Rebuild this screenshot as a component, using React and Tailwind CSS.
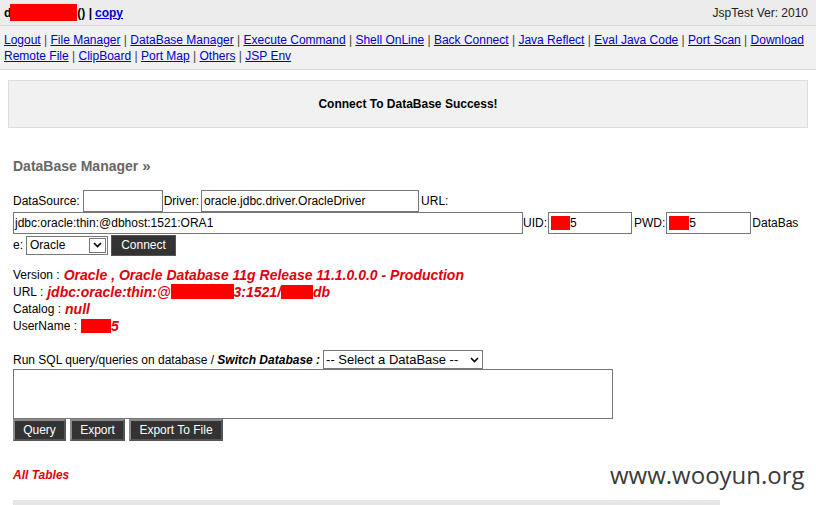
import React from "react";

const Red = ({ w, h = 16, className = "" }) => (
  <span className={`inline-block bg-[#ff0000] align-middle ${className}`} style={{ width: w, height: h }} />
);

const Chevron = () => (
  <svg width="9" height="6" viewBox="0 0 9 6"><path d="M1 1 L4.5 4.5 L8 1" fill="none" stroke="#000" strokeWidth="1.6" /></svg>
);

const Btn = ({ children, w }) => (
  <span className={`inline-flex h-[22px] items-center justify-center bg-[#333] text-white border-2 border-[#8a8a8a] border-r-[#555] border-b-[#555] ${w}`}>{children}</span>
);

const Sep = () => <span className="text-[#444]"> | </span>;
const L = ({ children }) => <a className="text-[#0000cc] underline">{children}</a>;

const Val = ({ children }) => (
  <span className="ml-[4px] text-[14px] leading-none font-bold italic text-[#e0000a] flex items-center">{children}</span>
);

export default function App() {
  const nav1 = ["Logout", "File Manager", "DataBase Manager", "Execute Command", "Shell OnLine", "Back Connect", "Java Reflect", "Eval Java Code", "Port Scan", "Download"];
  const nav2 = ["Remote File", "ClipBoard", "Port Map", "Others", "JSP Env"];
  return (
    <div className="relative w-[816px] h-[505px] overflow-hidden bg-white text-[12px] text-black" style={{ fontFamily: '"Liberation Sans", Arial, sans-serif' }}>
      {/* top bar */}
      <div className="h-[26px] bg-[#ececec] border-b border-[#d8d8d8] flex items-center justify-between pl-[4px] pr-[8px]">
        <div className="font-bold flex items-center">
          <span>d</span>
          <Red w={67} h={17} className="-ml-[1px]" />
          <span>() | </span>
          <span className="text-[#0000cc] underline ml-[3px]">copy</span>
        </div>
        <div className="text-[#222]">JspTest Ver: 2010</div>
      </div>
      {/* nav */}
      <div className="bg-[#f1f1f1] border-b border-[#d8d8d8] pl-[4px] pt-[6px] pb-[5px] leading-[16px]">
        <div>
          {nav1.map((n, i) => (
            <React.Fragment key={n}>{i > 0 && <Sep />}<L>{n}</L></React.Fragment>
          ))}
        </div>
        <div>
          {nav2.map((n, i) => (
            <React.Fragment key={n}>{i > 0 && <Sep />}<L>{n}</L></React.Fragment>
          ))}
        </div>
      </div>
      {/* message */}
      <div className="mx-[8px] mt-[10px] w-[800px] h-[48px] bg-[#f1f1f1] border border-[#dcdcdc] flex items-center justify-center font-bold">
        Connect To DataBase Success!
      </div>

      <div className="pl-[13px]">
        <div className="mt-[30px] text-[14px] font-bold text-[#666] leading-[16px]">DataBase Manager <span className="text-[15px]">»</span></div>

        {/* form */}
        <div className="mt-[16px]">
          <div className="flex items-center h-[22px]">
            <span>DataSource:</span>
            <span className="ml-[3px] w-[80px] h-[22px] border border-[#777] bg-white" />
            <span className="ml-[1px]">Driver:</span>
            <span className="ml-[2px] w-[218px] h-[22px] border border-[#777] bg-white flex items-center px-[2px]">oracle.jdbc.driver.OracleDriver</span>
            <span className="ml-[2px]">URL:</span>
          </div>
          <div className="flex items-center h-[22px]">
            <span className="w-[510px] h-[22px] border border-[#777] bg-white flex items-center px-[1px]">jdbc:oracle:thin:@dbhost:1521:ORA1</span>
            <span>UID:</span>
            <span className="ml-[1px] w-[84px] h-[22px] border border-[#777] bg-white flex items-center px-[2px]"><Red w={19} h={14} />5</span>
            <span className="ml-[2px]">PWD:</span>
            <span className="ml-[1px] w-[85px] h-[22px] border border-[#777] bg-white flex items-center px-[2px]"><Red w={20} h={14} />5</span>
            <span className="ml-[1px]">DataBas</span>
          </div>
          <div className="flex items-center h-[22px]">
            <span>e:</span>
            <span className="ml-[3px] w-[82px] h-[19px] border border-[#777] bg-white flex items-center justify-between pl-[3px] pr-[1px]">
              <span>Oracle</span>
              <span className="w-[17px] h-[15px] border border-[#777] flex items-center justify-center"><Chevron /></span>
            </span>
            <span className="ml-[3px] h-[21px] w-[65px] bg-[#333] text-white flex items-center justify-center border border-[#555]">Connect</span>
          </div>
        </div>

        {/* info */}
        <div className="mt-[11px]">
          <div className="h-[16px] flex items-center">Version :<Val>Oracle , Oracle Database 11g Release 11.1.0.0.0 - Production</Val></div>
          <div className="h-[17px] flex items-center">URL :<Val>jdbc:oracle:thin:@<Red w={63} h={15} />3:1521/<Red w={32} h={14} />db</Val></div>
          <div className="h-[17px] flex items-center">Catalog :<Val>null</Val></div>
          <div className="h-[17px] flex items-center">UserName :<Val><Red w={30} h={14} />5</Val></div>
        </div>

        {/* sql */}
        <div className="mt-[16px] flex items-center h-[19px]">
          <span>Run SQL query/queries on database / <b><i>Switch Database :</i></b></span>
          <span className="ml-[3px] w-[160px] h-[19px] border border-[#777] bg-white flex items-center justify-between pl-[2px] pr-[3px] text-[13px]">
            <span>-- Select a DataBase --</span>
            <Chevron />
          </span>
        </div>
        <div className="w-[600px] h-[50px] border border-[#777] bg-white" />
        <div className="flex gap-[4px]">
          <Btn w="w-[53px]">Query</Btn>
          <Btn w="w-[55px]">Export</Btn>
          <Btn w="w-[94px]">Export To File</Btn>
        </div>

        <div className="mt-[26px] font-bold italic text-[#e0000a] leading-[16px]">All Tables</div>
      </div>
      <div className="mt-[17px] ml-[13px] w-[707px] h-[10px] bg-[#e6e6e6]" />

      <div className="absolute left-[610px] top-[460px] text-[24px] text-[#3a3a3a] leading-[30px]" style={{ fontFamily: '"Open Sans", "Liberation Sans", sans-serif' }}>www.wooyun.org</div>
    </div>
  );
}
